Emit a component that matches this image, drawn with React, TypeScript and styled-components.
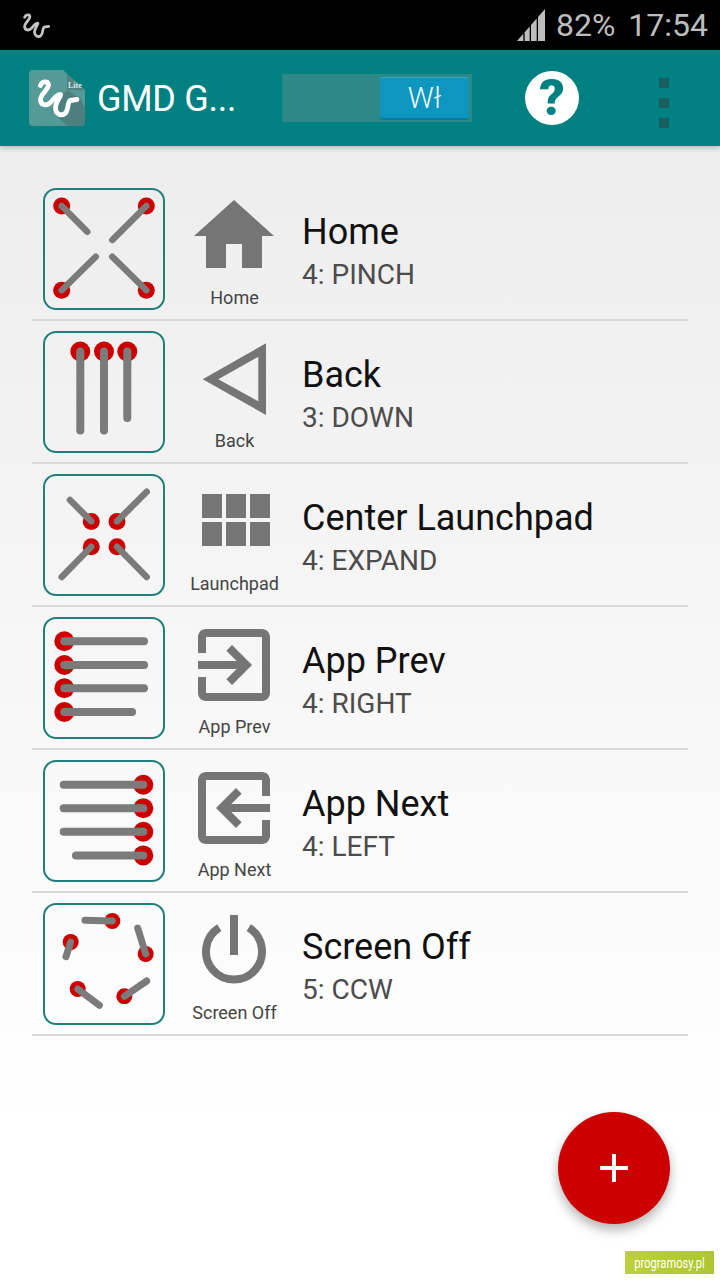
import React from 'react';
import styled, { createGlobalStyle } from 'styled-components';

const GlobalStyle = createGlobalStyle`
  * { box-sizing: border-box; }
  html, body { margin: 0; padding: 0; }
  body { font-family: Roboto, "Noto Sans", sans-serif; }
  svg { display: block; }
`;

const Screen = styled.div`
  position: relative;
  width: 720px;
  height: 1280px;
  overflow: hidden;
  display: flex;
  flex-direction: column;
  background: linear-gradient(#ededed 146px, #ffffff 1120px);
`;

const StatusBar = styled.div`
  height: 50px;
  background: #000;
  display: flex;
  align-items: center;
  padding: 0 12px 0 23px;
  color: #bdbdbd;
  font-size: 32px;
  line-height: 50px;
`;

const StatusLogo = styled.div`
  width: 27px;
  height: 27px;
  flex: none;
`;

const Signal = styled.svg`
  margin-left: auto;
  margin-right: 11px;
`;

const Clock = styled.span`
  margin-left: 13px;
`;

const AppBar = styled.div`
  position: relative;
  height: 96px;
  background: #008080;
  display: flex;
  align-items: center;
  padding-left: 29px;
  box-shadow: 0 2px 5px rgba(0, 0, 0, 0.22);
`;

const AppTitle = styled.div`
  margin-left: 12px;
  padding-top: 2px;
  width: 185px;
  color: #fff;
  font-size: 36px;
  letter-spacing: -0.3px;
`;

const Toggle = styled.div`
  width: 190px;
  height: 48px;
  background: #2e8886;
  display: flex;
  justify-content: flex-end;
  padding: 3px;
`;

const ToggleKnob = styled.div`
  width: 89px;
  height: 43px;
  border-radius: 3px;
  background: #0c96c0;
  border-top: 1px solid #35a7cb;
  border-bottom: 2px solid #0b7c9f;
  color: #f2f9fb;
  font-size: 29px;
  font-weight: 300;
  display: flex;
  align-items: center;
  justify-content: center;
`;

const Help = styled.div`
  margin-left: 53px;
  width: 54px;
  height: 54px;
  border-radius: 50%;
  background: #fff;
  color: #008080;
  font-size: 50px;
  font-weight: 900;
  display: flex;
  align-items: center;
  justify-content: center;
`;

const Overflow = styled.div`
  margin: 10px 0 0 80px;
  display: flex;
  flex-direction: column;
  gap: 10px;
`;

const OverflowDot = styled.div`
  width: 10px;
  height: 10px;
  background: #17605f;
`;

const List = styled.div`
  padding: 32px 32px 0;
`;

const Row = styled.div`
  display: flex;
  padding: 10px 0 9px 11px;
  border-bottom: 2px solid #d9d9d9;
`;

const GestureBox = styled.div`
  width: 122px;
  height: 122px;
  flex: none;
  border: 2px solid #1f7f7c;
  border-radius: 13px;
`;

const IconColumn = styled.div`
  width: 138px;
  flex: none;
  display: flex;
  flex-direction: column;
  align-items: center;
`;

const IconLabel = styled.div`
  padding: 2px 0 0 1px;
  font-size: 18px;
  line-height: 24px;
  color: #444;
`;

const RowText = styled.div`
  display: flex;
  flex-direction: column;
  justify-content: center;
  padding-top: 8px;
  margin-left: -1px;
`;

const RowTitle = styled.div`
  font-size: 36px;
  line-height: 44px;
  color: #111;
`;

const RowSub = styled.div`
  font-size: 28px;
  line-height: 42px;
  color: #4c4c4c;
`;

const Fab = styled.div`
  position: absolute;
  left: 558px;
  top: 1112px;
  width: 112px;
  height: 112px;
  border-radius: 50%;
  background: #cc0000;
  box-shadow: 0 6px 12px rgba(0, 0, 0, 0.3);
  display: flex;
  align-items: center;
  justify-content: center;
`;

const Watermark = styled.div`
  position: absolute;
  left: 625px;
  top: 1251px;
  width: 89px;
  height: 23px;
  background: linear-gradient(90deg, #bcd13c, #aec62f);
  color: #fff;
  font-size: 15px;
  display: flex;
  align-items: center;
  justify-content: center;
`;

const WatermarkText = styled.span`
  flex: none;
  transform: scaleX(0.74);
`;

type Point = [number, number];
type Stroke = { from: Point; to: Point };

const GRAY = '#7b7b7b';
const ICON = '#757575';
const squiggle =
  'M11.5 15.5C13 11 19 10.5 19.5 14.5C20 19 11.5 24 11.5 29.5C11.5 35.5 18 36.5 22 32C25 28.5 27.5 25 31 24.5C33.5 24.5 27 31 26.5 37.5C26 44 32 46.5 36 43.5C40 40 38 33 41 30.5L48 29.5';

function Gesture({ strokes, r, w }: { strokes: Stroke[]; r: number; w: number }) {
  return (
    <GestureBox>
      <svg width="118" height="118" viewBox="2 2 118 118">
        {strokes.map((s, i) => (
          <circle key={i} cx={s.from[0]} cy={s.from[1]} r={r} fill="#cc0000" />
        ))}
        {strokes.map((s, i) => (
          <line
            key={i}
            x1={s.from[0]}
            y1={s.from[1]}
            x2={s.to[0]}
            y2={s.to[1]}
            stroke={GRAY}
            strokeWidth={w}
            strokeLinecap="round"
          />
        ))}
      </svg>
    </GestureBox>
  );
}

function IconSvg({ children }: { children: React.ReactNode }) {
  return (
    <svg width="96" height="96" viewBox="0 0 96 96" fill={ICON}>
      {children}
    </svg>
  );
}

const exitPath =
  'M10.09 15.59L11.5 17l5-5-5-5-1.41 1.41L12.67 11H3v2h9.67l-2.58 2.59zM19 3H5c-1.11 0-2 .9-2 2v4h2V5h14v14H5v-4H3v4c0 1.1.89 2 2 2h14c1.1 0 2-.9 2-2V5c0-1.1-.9-2-2-2z';

const rows = [
  {
    title: 'Home',
    sub: '4: PINCH',
    label: 'Home',
    r: 8.5,
    w: 6.5,
    strokes: [
      { from: [18.7, 18], to: [44.3, 43.7] },
      { from: [103.3, 18], to: [69.3, 52] },
      { from: [18.7, 102.3], to: [52.7, 68.7] },
      { from: [103.3, 102.3], to: [69.3, 68.7] },
    ],
    icon: <path d="M40 80V56h16v24h20V48h12L48 12 8 48h12v32z" />,
  },
  {
    title: 'Back',
    sub: '3: DOWN',
    label: 'Back',
    r: 10,
    w: 8,
    strokes: [
      { from: [37.3, 20.5], to: [37.3, 99.5] },
      { from: [61, 20.5], to: [61, 99.5] },
      { from: [84.3, 20.5], to: [84.3, 87] },
    ],
    icon: <path fillRule="evenodd" d="M16.7 48.3L80 12.3V84zM32.3 48.3L72.3 70.3V25.7z" />,
  },
  {
    title: 'Center Launchpad',
    sub: '4: EXPAND',
    label: 'Launchpad',
    r: 8.5,
    w: 6.5,
    strokes: [
      { from: [48.3, 47.4], to: [27, 26] },
      { from: [74, 47.4], to: [103.7, 17.7] },
      { from: [48.3, 72.7], to: [18.7, 103] },
      { from: [74, 72.7], to: [103.7, 103] },
    ],
    icon: (
      <path d="M16 20h20v24H16zM40 20h20v24H40zM64 20h20v24H64zM16 48h20v24H16zM40 48h20v24H40zM64 48h20v24H64z" />
    ),
  },
  {
    title: 'App Prev',
    sub: '4: RIGHT',
    label: 'App Prev',
    r: 10,
    w: 8,
    strokes: [
      { from: [21.3, 24.3], to: [101, 24.3] },
      { from: [21.3, 48], to: [101, 48] },
      { from: [21.3, 71.3], to: [101, 71.3] },
      { from: [21.3, 95], to: [89, 95] },
    ],
    icon: <path transform="scale(4)" d={exitPath} />,
  },
  {
    title: 'App Next',
    sub: '4: LEFT',
    label: 'App Next',
    r: 10,
    w: 8,
    strokes: [
      { from: [100.3, 24.7], to: [20.7, 24.7] },
      { from: [100.3, 48.3], to: [20.7, 48.3] },
      { from: [100.3, 71.7], to: [20.7, 71.7] },
      { from: [100.3, 95.4], to: [33, 95.4] },
    ],
    icon: <path transform="translate(96 0) scale(-4 4)" d={exitPath} />,
  },
  {
    title: 'Screen Off',
    sub: '5: CCW',
    label: 'Screen Off',
    r: 8,
    w: 7,
    strokes: [
      { from: [69.3, 18], to: [42, 17.3] },
      { from: [27.7, 39], to: [23, 53.6] },
      { from: [102.7, 51], to: [94.7, 25] },
      { from: [34.7, 86], to: [56.3, 102.3] },
      { from: [81.3, 93.3], to: [103.7, 78] },
    ],
    icon: (
      <>
        <rect x="44" y="12" width="8" height="40" />
        <path d="M33.3 24.7A28 28 0 1 0 62.7 24.7" fill="none" stroke={ICON} strokeWidth="8" />
      </>
    ),
  },
] as { title: string; sub: string; label: string; r: number; w: number; strokes: Stroke[]; icon: React.ReactNode }[];

const signalBars = [
  [0, 6.3],
  [7.7, 12.7],
  [14, 19.7],
  [21, 28],
];

export default function App() {
  return (
    <Screen>
      <GlobalStyle />
      <StatusBar>
        <StatusLogo>
          <svg width="27" height="27" viewBox="9 9 41 38" fill="none">
            <path d={squiggle} stroke="#c4c4c4" strokeWidth="4.2" strokeLinecap="round" strokeLinejoin="round" />
          </svg>
        </StatusLogo>
        <Signal width="28" height="32" viewBox="0 0 28 32" fill="#bdbdbd">
          {signalBars.map(([a, b]) => (
            <polygon key={a} points={`${a},32 ${a},${32 - (a * 32) / 28} ${b},${32 - (b * 32) / 28} ${b},32`} />
          ))}
        </Signal>
        <span>82%</span>
        <Clock>17:54</Clock>
      </StatusBar>
      <AppBar>
        <svg width="56" height="56" viewBox="0 0 56 56">
          <path d="M4 0H34L56 20V52a4 4 0 0 1-4 4H4a4 4 0 0 1-4-4V4a4 4 0 0 1 4-4z" fill="#559a97" />
          <path d="M22 40L38 56H52a4 4 0 0 0 4-4V38L51 28 38 20z" fill="#4c7f7e" />
          <path d="M38 3.6L56 20H38z" fill="#4f8280" />
          <text x="39" y="18" fontFamily="Liberation Serif, serif" fontSize="8" fontWeight="700" fill="#dcebea">
            Lite
          </text>
          <path d={squiggle} fill="none" stroke="#fff" strokeWidth="4.8" strokeLinecap="round" strokeLinejoin="round" />
        </svg>
        <AppTitle>GMD G...</AppTitle>
        <Toggle>
          <ToggleKnob>Wł</ToggleKnob>
        </Toggle>
        <Help>?</Help>
        <Overflow>
          <OverflowDot />
          <OverflowDot />
          <OverflowDot />
        </Overflow>
      </AppBar>
      <List>
        {rows.map(row => (
          <Row key={row.title}>
            <Gesture strokes={row.strokes} r={row.r} w={row.w} />
            <IconColumn>
              <IconSvg>{row.icon}</IconSvg>
              <IconLabel>{row.label}</IconLabel>
            </IconColumn>
            <RowText>
              <RowTitle>{row.title}</RowTitle>
              <RowSub>{row.sub}</RowSub>
            </RowText>
          </Row>
        ))}
      </List>
      <Fab>
        <svg width="28" height="28" viewBox="0 0 28 28" fill="#fff">
          <path d="M12 0h4v12h12v4H16v12h-4V16H0v-4h12z" />
        </svg>
      </Fab>
      <Watermark>
        <WatermarkText>programosy.pl</WatermarkText>
      </Watermark>
    </Screen>
  );
}
